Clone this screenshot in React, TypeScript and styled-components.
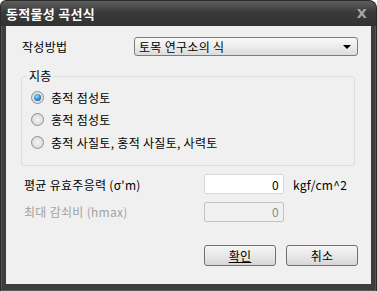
import React from "react";
import styled, { createGlobalStyle } from "styled-components";

const Global = createGlobalStyle`
  html, body { margin: 0; padding: 0; background: #ffffff; }
  body { font-family: "Noto Sans CJK KR", "Noto Sans", sans-serif; font-size: 12px; letter-spacing: 0.3px; }
`;

const Window = styled.div`
  width: 377px;
  height: 291px;
  box-sizing: border-box;
  display: flex;
  flex-direction: column;
  background: #3e3e3e;
  border-radius: 6px 8px 0 0;
  border: 1px solid #2a2a2a;
  border-bottom: none;
  overflow: hidden;
`;

const TitleBar = styled.div`
  height: 25px;
  flex: none;
  display: flex;
  align-items: center;
  justify-content: space-between;
  padding: 0 9px 0 5px;
  background: linear-gradient(#5e5e5e, #3a3a3a 45%, #323232);
  color: #ffffff;
  font-weight: bold;
  font-size: 13px;
`;

const Close = styled.span`
  color: #a8a8a8;
  font-family: "DejaVu Sans", sans-serif;
  font-weight: bold;
  font-size: 13px;
`;

const Frame = styled.div`
  flex: 1;
  display: flex;
  padding: 0 5px 6px 5px;
  border-bottom: 1px solid #5a5a5a;
  box-shadow: inset 1px 0 0 #555, inset -1px 0 0 #555;
`;

const Body = styled.div`
  flex: 1;
  background: #f0f0f0;
  display: flex;
  flex-direction: column;
  padding: 11px 13px 0 15px;
  color: #000;
`;

const Row = styled.div<{ $top?: number; $h?: number }>`
  display: flex;
  align-items: center;
  height: ${(p) => p.$h ?? 20}px;
  margin-top: ${(p) => p.$top ?? 0}px;
`;

const Label = styled.span<{ $w: number; $pad?: number; $disabled?: boolean }>`
  width: ${(p) => p.$w}px;
  padding-left: ${(p) => p.$pad ?? 0}px;
  box-sizing: border-box;
  color: ${(p) => (p.$disabled ? "#a3a3a3" : "#000")};
  white-space: nowrap;
`;

const Select = styled.div`
  width: 224px;
  height: 19px;
  box-sizing: border-box;
  border: 1px solid #7c7c7c;
  border-radius: 3px;
  background: linear-gradient(#fafafa, #ececec 50%, #dcdcdc);
  display: flex;
  align-items: center;
  justify-content: space-between;
  padding: 0 6px 0 4px;
`;

const Arrow = styled.span`
  width: 0;
  height: 0;
  border-left: 4px solid transparent;
  border-right: 4px solid transparent;
  border-top: 4px solid #000;
  margin-top: 1px;
`;

const Group = styled.div`
  position: relative;
  margin-top: 20px;
  width: 334px;
  height: 90px;
  box-sizing: border-box;
  border: 1px solid #d5dfe5;
  border-radius: 3px;
  padding: 9px 0 0 9px;
  display: flex;
  flex-direction: column;
`;

const Caption = styled.span`
  position: absolute;
  left: 5px;
  top: -9px;
  padding: 0 2px;
  background: #f0f0f0;
  line-height: 16px;
`;

const RadioRow = styled.div`
  display: flex;
  align-items: center;
  height: 22.5px;
  gap: 7px;
`;

const Radio = styled.span<{ $checked?: boolean }>`
  width: 13px;
  height: 13px;
  box-sizing: border-box;
  border-radius: 50%;
  border: 1px solid #8f8f8f;
  background: radial-gradient(circle at 50% 50%, #f4f4f4 0, #dcdcdc 70%, #cfcfcf 100%);
  display: flex;
  align-items: center;
  justify-content: center;
  &::after {
    content: "";
    display: ${(p) => (p.$checked ? "block" : "none")};
    width: 7px;
    height: 7px;
    border-radius: 50%;
    background: radial-gradient(circle at 40% 35%, #9fd6f7 0, #2e85c8 55%, #0c4f8a 100%);
  }
`;

const Input = styled.div<{ $disabled?: boolean }>`
  width: 80px;
  height: 20px;
  box-sizing: border-box;
  border: 1px solid ${(p) => (p.$disabled ? "#c3c3c3" : "#d9d9d9")};
  border-radius: 2px;
  background: ${(p) => (p.$disabled ? "#f0f0f0" : "#ffffff")};
  color: ${(p) => (p.$disabled ? "#8a8a8a" : "#000")};
  display: flex;
  align-items: center;
  justify-content: flex-end;
  padding-right: 4px;
`;

const Unit = styled.span`
  margin-left: 9px;
`;

const Buttons = styled.div`
  display: flex;
  justify-content: flex-end;
  gap: 10px;
  margin-top: 23px;
`;

const Button = styled.div<{ $focus?: boolean }>`
  width: 72px;
  height: 21px;
  box-sizing: border-box;
  border: 1px solid #707070;
  border-radius: 3px;
  background: linear-gradient(#f6f6f6, #e8e8e8 50%, #d6d6d6);
  display: flex;
  align-items: center;
  justify-content: center;
  text-decoration: ${(p) => (p.$focus ? "underline" : "none")};
`;

export default function App() {
  return (
    <>
      <Global />
      <Window>
        <TitleBar>
          <span>동적물성 곡선식</span>
          <Close>X</Close>
        </TitleBar>
        <Frame>
          <Body>
            <Row $h={19}>
              <Label $w={113} $pad={1}>작성방법</Label>
              <Select>
                <span>토목 연구소의 식</span>
                <Arrow />
              </Select>
            </Row>
            <Group>
              <Caption>지층</Caption>
              <RadioRow>
                <Radio $checked />
                <span>충적 점성토</span>
              </RadioRow>
              <RadioRow>
                <Radio />
                <span>홍적 점성토</span>
              </RadioRow>
              <RadioRow>
                <Radio />
                <span>충적 사질토, 홍적 사질토, 사력토</span>
              </RadioRow>
            </Group>
            <Row $top={8}>
              <Label $w={183} $pad={3}>평균 유효주응력 (σ'm)</Label>
              <Input>0</Input>
              <Unit>kgf/cm^2</Unit>
            </Row>
            <Row $top={7} $h={21}>
              <Label $w={183} $pad={3} $disabled>최대 감쇠비 (hmax)</Label>
              <Input $disabled>0</Input>
            </Row>
            <Buttons>
              <Button $focus>확인</Button>
              <Button>취소</Button>
            </Buttons>
          </Body>
        </Frame>
      </Window>
    </>
  );
}
